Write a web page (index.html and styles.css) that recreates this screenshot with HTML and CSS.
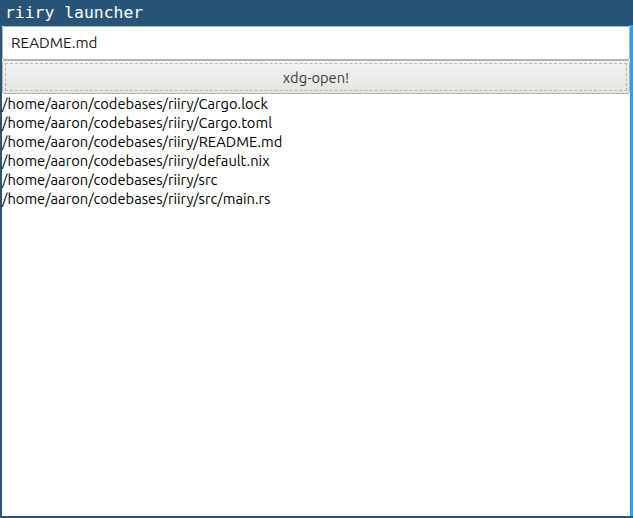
FILE: index.html
```html
<!DOCTYPE html>
<html>
<head>
<meta charset="utf-8">
<link rel="stylesheet" href="styles.css">
</head>
<body>
<div class="window">
  <div class="titlebar">riiry launcher</div>
  <div class="content">
    <div class="entry">README.md</div>
    <div class="button"><div class="focus">xdg-open!</div></div>
    <ul class="results">
      <li>/home/aaron/codebases/riiry/Cargo.lock</li>
      <li>/home/aaron/codebases/riiry/Cargo.toml</li>
      <li>/home/aaron/codebases/riiry/README.md</li>
      <li>/home/aaron/codebases/riiry/default.nix</li>
      <li>/home/aaron/codebases/riiry/src</li>
      <li>/home/aaron/codebases/riiry/src/main.rs</li>
    </ul>
  </div>
</div>
</body>
</html>
```
FILE: styles.css
```css
html, body { margin: 0; padding: 0; }
body { width: 633px; height: 518px; overflow: hidden; background: #285577; }
.window { display: flex; flex-direction: column; height: 518px; }
.titlebar {
  height: 25px; line-height: 25px; padding-left: 5px;
  color: #ffffff; font-family: "DejaVu Sans Mono", monospace; font-size: 16.4px;
  background: #285577; box-sizing: border-box;
}
.content {
  flex: 1; background: #ffffff;
  margin: 1px 3px 2px 2px;
  display: flex; flex-direction: column;
  font-family: "Ubuntu", "DejaVu Sans", sans-serif; font-size: 14.7px; color: #000;
}
body::after { content: ""; position: absolute; right: 0; top: 25px; width: 3px; height: 491px; background: #2e9ef4; }
.entry {
  height: 34px; box-sizing: border-box; border: 1px solid #b6b3ae; border-radius: 2px;
  padding-left: 8px; line-height: 32px; background: #fff; color: #1a1a1a; font-size: 15.2px;
}
.button {
  height: 34px; box-sizing: border-box; border: 1px solid #b6b3ae; border-radius: 3px;
  background: linear-gradient(#f3f2f0, #e6e4e1); padding: 2px;
}
.focus {
  height: 100%; box-sizing: border-box; border: 1px dashed #b9b7b3;
  text-align: center; line-height: 28px; color: #3c3c3c;
}
.results { list-style: none; margin: 0; padding: 0; }
.results li { height: 19px; line-height: 19px; white-space: nowrap; }
```
